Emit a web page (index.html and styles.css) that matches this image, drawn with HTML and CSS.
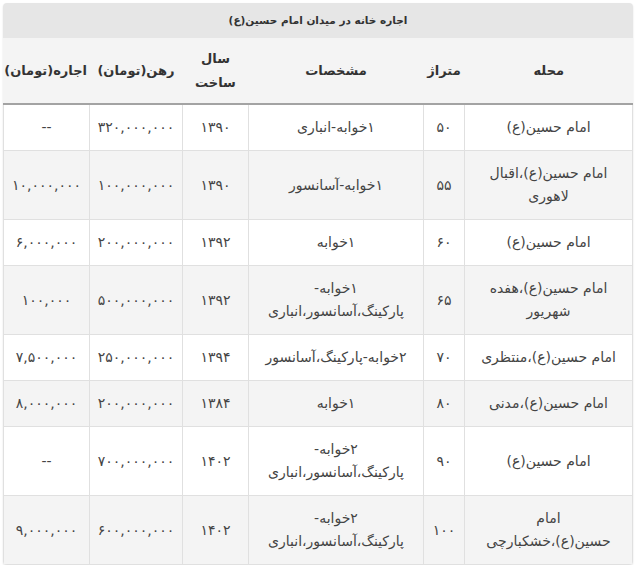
FILE: index.html
```html
<!DOCTYPE html>
<html lang="fa" dir="rtl">
<head>
<meta charset="utf-8">
<link rel="stylesheet" href="styles.css">
</head>
<body>
<div class="wrap">
  <div class="caption">اجاره خانه در میدان امام حسین(ع)</div>
  <table class="grid">
    <thead>
      <tr>
        <th class="c1">محله</th>
        <th class="c2">متراژ</th>
        <th class="c3">مشخصات</th>
        <th class="c4">سال<br>ساخت</th>
        <th class="c5">رهن(تومان)</th>
        <th class="c6">اجاره(تومان)</th>
      </tr>
    </thead>
    <tbody>
      <tr class="one">
        <td>امام حسین(ع)</td><td>۵۰</td><td>۱خوابه-انباری</td><td>۱۳۹۰</td><td>۳۲۰,۰۰۰,۰۰۰</td><td>--</td>
      </tr>
      <tr class="two">
        <td>امام حسین(ع)،اقبال لاهوری</td><td>۵۵</td><td>۱خوابه-آسانسور</td><td>۱۳۹۰</td><td>۱۰۰,۰۰۰,۰۰۰</td><td>۱۰,۰۰۰,۰۰۰</td>
      </tr>
      <tr class="one">
        <td>امام حسین(ع)</td><td>۶۰</td><td>۱خوابه</td><td>۱۳۹۲</td><td>۲۰۰,۰۰۰,۰۰۰</td><td>۶,۰۰۰,۰۰۰</td>
      </tr>
      <tr class="two">
        <td>امام حسین(ع)،هفده شهریور</td><td>۶۵</td><td>۱خوابه-پارکینگ،آسانسور،انباری</td><td>۱۳۹۲</td><td>۵۰۰,۰۰۰,۰۰۰</td><td>۱۰۰,۰۰۰</td>
      </tr>
      <tr class="one">
        <td>امام حسین(ع)،منتظری</td><td>۷۰</td><td>۲خوابه-پارکینگ،آسانسور</td><td>۱۳۹۴</td><td>۲۵۰,۰۰۰,۰۰۰</td><td>۷,۵۰۰,۰۰۰</td>
      </tr>
      <tr class="two">
        <td>امام حسین(ع)،مدنی</td><td>۸۰</td><td>۱خوابه</td><td>۱۳۸۴</td><td>۲۰۰,۰۰۰,۰۰۰</td><td>۸,۰۰۰,۰۰۰</td>
      </tr>
      <tr class="one">
        <td>امام حسین(ع)</td><td>۹۰</td><td>۲خوابه-پارکینگ،آسانسور،انباری</td><td>۱۴۰۲</td><td>۷۰۰,۰۰۰,۰۰۰</td><td>--</td>
      </tr>
      <tr class="two">
        <td>امام حسین(ع)،خشکبارچی</td><td>۱۰۰</td><td>۲خوابه-پارکینگ،آسانسور،انباری</td><td>۱۴۰۲</td><td>۶۰۰,۰۰۰,۰۰۰</td><td>۹,۰۰۰,۰۰۰</td>
      </tr>
    </tbody>
  </table>
</div>
</body>
</html>
```

FILE: styles.css
```css
html, body {
  margin: 0;
  padding: 0;
  background: #ffffff;
}
body {
  font-family: "DejaVu Sans", "Noto Sans", sans-serif;
  color: #444;
  font-size: 14px;
}
.wrap {
  width: 630px;
  margin: 3px auto 0 3px;
  border-radius: 4px;
  box-shadow: 0 1px 2px rgba(0,0,0,0.12);
  overflow: hidden;
}
.caption {
  background: #e6e6e6;
  height: 35px;
  line-height: 34px;
  padding: 0 12px;
  font-weight: bold;
  font-size: 10.5px;
  color: #333;
  text-align: center;
}
.grid {
  width: 629px;
  border-collapse: collapse;
  table-layout: fixed;
}
.grid th, .grid td {
  box-sizing: border-box;
}
.c1 { width: 168px; }
.c2 { width: 41px; }
.c3 { width: 175px; }
.c4 { width: 66px; }
.c5 { width: 93px; }
.c6 { width: 86px; }
.grid th {
  background: #f4f4f4;
  font-weight: bold;
  font-size: 13px;
  color: #333;
  height: 66px;
  padding: 0 2px;
  line-height: 24px;
  border-left: 1px solid #f4f4f4;
  border-bottom: 2px solid #a3a3a3;
  text-align: center;
}
.grid td {
  text-align: center;
  vertical-align: middle;
  border: 1px solid #e0e0e0;
  padding: 11px 6px;
  line-height: 23px;
  font-size: 14px;
}
.grid td:first-child {
  padding-left: 12px;
  padding-right: 12px;
}
.grid tr.one td { background: #ffffff; }
.grid tr.two td { background: #f4f4f4; }
```
